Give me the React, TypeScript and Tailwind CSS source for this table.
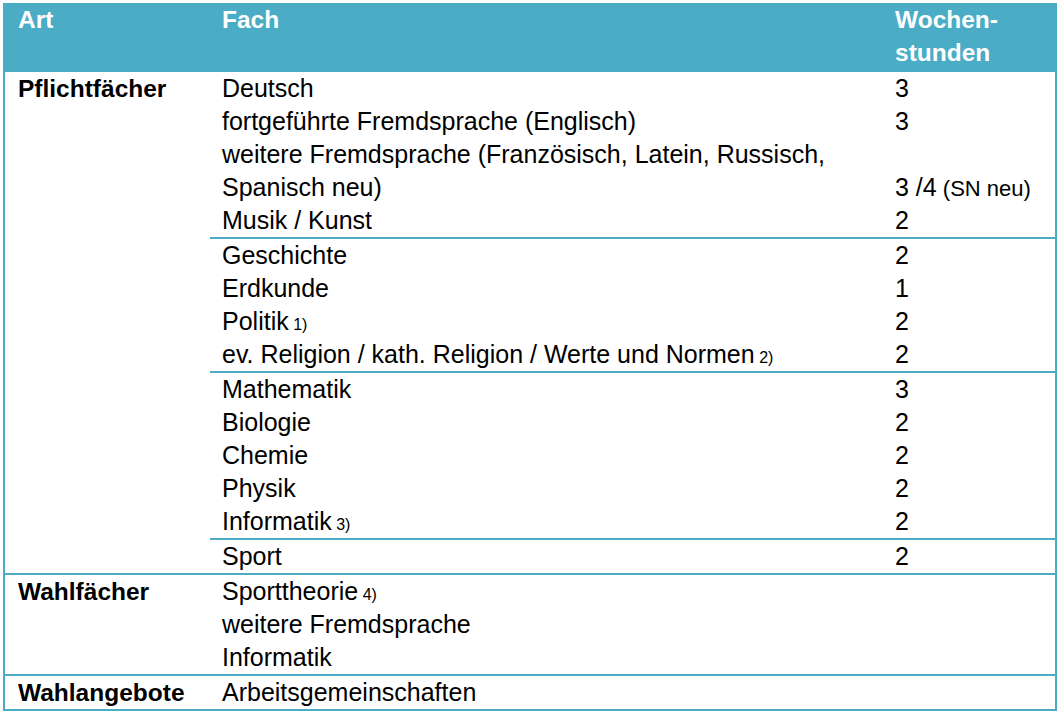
const blue = "border-[#4BACC6]";

type Line = { fach: string; note?: string; std?: string; stdNote?: string };

const pflicht: Line[][] = [
  [
    { fach: "Deutsch", std: "3" },
    { fach: "fortgeführte Fremdsprache (Englisch)", std: "3" },
    {
      fach: "weitere Fremdsprache (Französisch, Latein, Russisch, Spanisch neu)",
      std: "3 /4",
      stdNote: "(SN neu)",
    },
    { fach: "Musik / Kunst", std: "2" },
  ],
  [
    { fach: "Geschichte", std: "2" },
    { fach: "Erdkunde", std: "1" },
    { fach: "Politik", note: "1)", std: "2" },
    { fach: "ev. Religion / kath. Religion / Werte und Normen", note: "2)", std: "2" },
  ],
  [
    { fach: "Mathematik", std: "3" },
    { fach: "Biologie", std: "2" },
    { fach: "Chemie", std: "2" },
    { fach: "Physik", std: "2" },
    { fach: "Informatik", note: "3)", std: "2" },
  ],
  [{ fach: "Sport", std: "2" }],
];

const wahl: Line[] = [
  { fach: "Sporttheorie", note: "4)" },
  { fach: "weitere Fremdsprache" },
  { fach: "Informatik" },
];

function Row({ line }: { line: Line }) {
  return (
    <div className="flex items-end">
      <div className="w-[673px] px-3">
        {line.fach}
        {line.note && <span className="text-[16px] leading-none"> {line.note}</span>}
      </div>
      <div className="flex-1 px-3 whitespace-nowrap">
        {line.std}
        {line.stdNote && <span className="text-[22px] leading-none"> {line.stdNote}</span>}
      </div>
    </div>
  );
}

function Group({ label, blocks }: { label: string; blocks: Line[][] }) {
  return (
    <div className="flex">
      <div className="w-[205px] pl-[13px] font-bold text-[24.5px]">{label}</div>
      <div className="flex-1">
        {blocks.map((b, i) => (
          <div key={i} className={i > 0 ? `border-t-2 ${blue}` : ""}>
            {b.map((l, j) => (
              <Row key={j} line={l} />
            ))}
          </div>
        ))}
      </div>
    </div>
  );
}

export default function App() {
  return (
    <div
      className="min-h-screen bg-white text-black text-[25px] leading-[33px]"
      style={{ fontFamily: '"Liberation Sans", Arial, sans-serif' }}
    >
      <div className="ml-[3px] pt-[3px] w-[1054px]">
        {/* Kopfzeile */}
        <div className="flex h-[69px] bg-[#4BACC6] text-white font-bold text-[24.5px]">
          <div className="w-[207px] pl-[15px]">Art</div>
          <div className="w-[673px] px-3">Fach</div>
          <div className="flex-1 px-3">
            Wochen-
            <br />
            stunden
          </div>
        </div>

        <div className={`border-2 border-t-0 ${blue}`}>
          <Group label="Pflichtfächer" blocks={pflicht} />
          <div className={`border-t-2 ${blue}`}>
            <Group label="Wahlfächer" blocks={[wahl]} />
          </div>
          <div className={`border-t-2 ${blue}`}>
            <Group label="Wahlangebote" blocks={[[{ fach: "Arbeitsgemeinschaften" }]]} />
          </div>
        </div>
      </div>
    </div>
  );
}
